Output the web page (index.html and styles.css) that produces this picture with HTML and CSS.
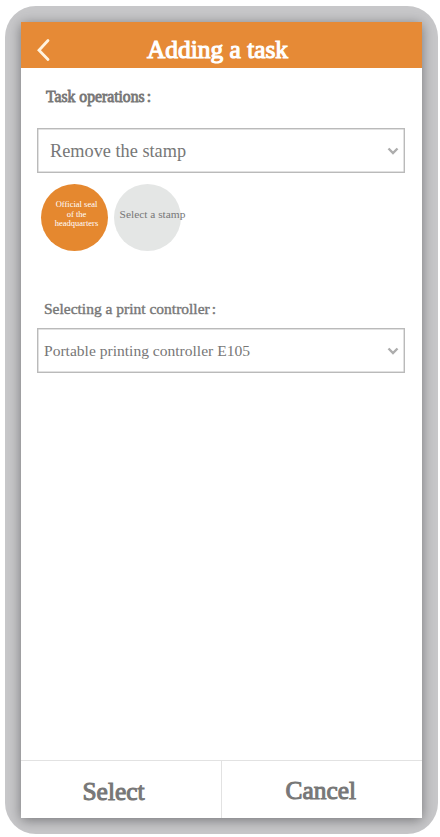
FILE: index.html
```html
<!DOCTYPE html>
<html lang="en">
<head>
<meta charset="utf-8">
<title>Adding a task</title>
<link rel="stylesheet" href="styles.css">
</head>
<body>
<div class="device">
  <main class="screen">
    <header class="header">
      <svg class="back" width="14" height="24" viewBox="0 0 14 24"><path d="M12 2.5 3 12.2 12 21.5"/></svg>
      <h1 class="title">Adding a task</h1>
    </header>
    <section class="content">
      <h2 class="label label-task">Task operations<span class="colon">:</span></h2>
      <div class="select select-task">
        <span>Remove the stamp</span>
        <svg class="chevron" width="12" height="8" viewBox="0 0 12 8"><path d="M1.5 1.5 6 6 10.5 1.5"/></svg>
      </div>
      <div class="stamps">
        <div class="stamp stamp-active"><span>Official seal<br>of the<br>headquarters</span></div>
        <div class="stamp stamp-empty"><span>Select a stamp</span></div>
      </div>
      <h2 class="label label-controller">Selecting a print controller<span class="colon">:</span></h2>
      <div class="select select-controller">
        <span>Portable printing controller E105</span>
        <svg class="chevron" width="12" height="8" viewBox="0 0 12 8"><path d="M1.5 1.5 6 6 10.5 1.5"/></svg>
      </div>
    </section>
    <footer class="actions">
      <div class="action action-select">Select</div>
      <div class="action action-cancel">Cancel</div>
    </footer>
  </main>
</div>
</body>
</html>
```
FILE: styles.css
```css
* { box-sizing: border-box; }
body {
  margin: 0;
  height: 837px;
  padding: 6px 2px 3px 5px;
  background: #fff;
  font-family: "Liberation Serif", "Times New Roman", serif;
  color: #777;
  overflow: hidden;
}
.device {
  width: 433px;
  height: 828px;
  padding: 16px;
  border-radius: 31px;
  background: #c8c8ca;
  overflow: hidden;
}
.screen {
  display: flex;
  flex-direction: column;
  width: 401px;
  height: 796px;
  background: #fff;
  box-shadow: 0 2px 12px rgba(60, 60, 64, 0.6);
}
.header {
  display: flex;
  align-items: center;
  height: 46px;
  padding-left: 15px;
  background: #e68a36;
  color: #fff;
}
.back { margin-top: 9px; }
.back path { fill: none; stroke: #fff3df; stroke-width: 2.8; stroke-linecap: round; }
.title {
  margin: 7px 0 0 97px;
  font-size: 25.4px;
  line-height: 30px;
  font-weight: 400;
  white-space: nowrap;
  -webkit-text-stroke: 1.1px #fff;
}
.content { flex: 1; padding: 20px 17px 0 16px; }
.label {
  margin: 0;
  font-size: 15.5px;
  line-height: 18px;
  font-weight: 400;
  white-space: nowrap;
}
.label-task { padding-left: 9px; font-size: 15.7px; -webkit-text-stroke: 0.8px #777; }
.label-controller { margin-top: 49.5px; padding-left: 7px; -webkit-text-stroke: 0.4px #777; }
.colon { margin-left: 2px; }
.select {
  display: flex;
  align-items: center;
  justify-content: space-between;
  height: 45px;
  padding-right: 5px;
  border: 1px solid #bababa;
  box-shadow: inset 0 0 0 0.5px #c4c4c4;
  white-space: nowrap;
}
.select-task { margin-top: 22px; padding-left: 12px; font-size: 18.3px; padding-top: 1px; }
.select-controller { margin-top: 10px; padding-left: 6px; font-size: 15.55px; }
.chevron path { fill: none; stroke: #adadad; stroke-width: 2.4; }
.stamps { display: flex; gap: 6px; margin: 10.5px 0 0 4px; }
.stamp {
  display: flex;
  align-items: center;
  justify-content: center;
  width: 67px;
  height: 67px;
  border-radius: 50%;
  text-align: center;
  white-space: nowrap;
}
.stamp-active {
  padding: 0 0 5px 4px;
  background: #e5882f;
  color: #fff;
  font-size: 8.5px;
  line-height: 9.5px;
}
.stamp-empty { padding: 0 0 6px 10px; background: #e4e6e5; font-size: 11.4px; }
.actions { display: flex; height: 58px; border-top: 1px solid #e2e2e2; }
.action {
  font-size: 25.4px;
  line-height: 30px;
  -webkit-text-stroke: 1px #777;
}
.action-select { width: 201px; padding: 15px 0 0 61.5px; border-right: 1px solid #e2e2e2; }
.action-cancel { flex: 1; padding: 14px 0 0 63.5px; }
```
